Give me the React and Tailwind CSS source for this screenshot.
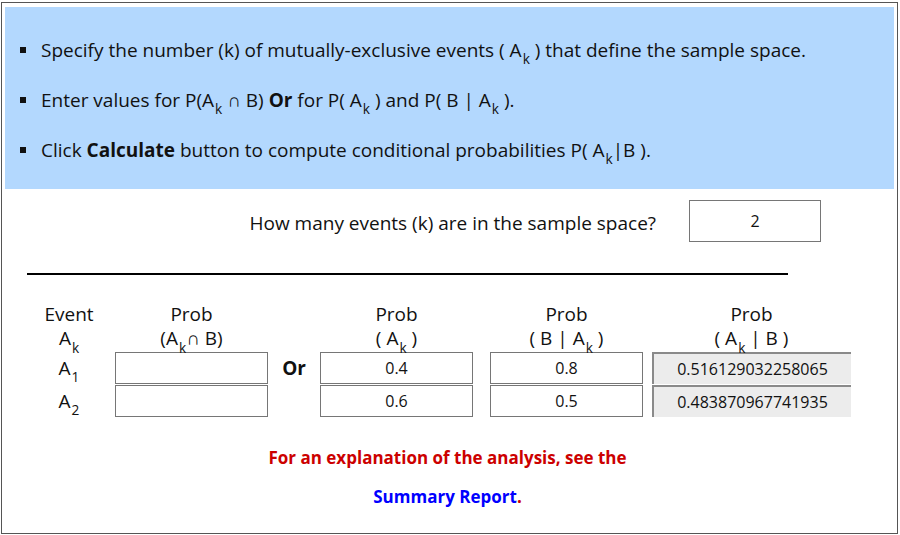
import React from 'react';

const Sub = ({ children }) => (
  <sub className="text-[0.72em] align-[-0.3em] leading-none ml-[1px]">{children}</sub>
);

const Ak = () => (
  <>
    A<Sub>k</Sub>
  </>
);

const Bullet = ({ children }) => (
  <li className="flex items-center h-[50px]">
    <span className="w-[6px] h-[6px] bg-[#111] ml-[15px] mr-[15px] shrink-0" />
    <span>{children}</span>
  </li>
);

const InputBox = ({ value }) => (
  <div className="w-[153px] h-[32px] border border-[#767676] bg-white flex items-center justify-center text-[16px]">
    {value}
  </div>
);

const OutputBox = ({ value }) => (
  <div className="w-[199px] h-[32px] bg-[#ececec] border-t-2 border-l-2 border-t-[#8a8a8a] border-l-[#8a8a8a] flex items-center justify-center text-[16px]">
    {value}
  </div>
);

const App = () => {
  const rows = [
    { label: '1', joint: '', prior: '0.4', like: '0.8', post: '0.516129032258065' },
    { label: '2', joint: '', prior: '0.6', like: '0.5', post: '0.483870967741935' },
  ];

  return (
    <div className="w-[900px] h-[535px] bg-white pt-[2px] pl-[1px]" style={{ fontFamily: '"Open Sans", "Noto Sans", sans-serif' }}>
      <div className="w-[897px] h-[532px] border border-[#555] px-[3px] pt-[4px] text-[#111]">
        <ul className="bg-[#b3d8fe] h-[182px] pt-[18px] text-[19px]">
          <Bullet>Specify the number (k) of mutually-exclusive events ( <Ak /> ) that define the sample space.</Bullet>
          <Bullet>
            Enter values for P(<Ak /> ∩ B) <b>Or</b> for P( <Ak /> ) and P( B | <Ak /> ).
          </Bullet>
          <Bullet>
            Click <b>Calculate</b> button to compute conditional probabilities P( <Ak />|B ).
          </Bullet>
        </ul>

        <div className="flex items-center mt-[11px] h-[42px] pt-[4px]">
          <div className="w-[684px] text-right pr-[33px] text-[19px]">How many events (k) are in the sample space?</div>
          <div className="w-[132px] h-[42px] -mt-[4px] border border-[#767676] flex items-center justify-center text-[16px]">2</div>
        </div>

        <div className="ml-[22px] w-[761px] h-[2px] bg-black mt-[31px]" />

        <div className="ml-[21px] mt-[27px] text-[19px]">
          <div className="flex leading-[25px]">
            <div className="w-[89px] text-center pr-[3px]">Event</div>
            <div className="w-[153px] text-center">Prob</div>
            <div className="w-[52px]" />
            <div className="w-[153px] text-center">Prob</div>
            <div className="w-[17px]" />
            <div className="w-[153px] text-center">Prob</div>
            <div className="w-[9px]" />
            <div className="w-[199px] text-center">Prob</div>
          </div>
          <div className="flex leading-[22px]">
            <div className="w-[89px] text-center pr-[3px]"><Ak /></div>
            <div className="w-[153px] text-center">(<Ak />∩ B)</div>
            <div className="w-[52px]" />
            <div className="w-[153px] text-center">( <Ak /> )</div>
            <div className="w-[17px]" />
            <div className="w-[153px] text-center">( B | <Ak /> )</div>
            <div className="w-[9px]" />
            <div className="w-[199px] text-center">( <Ak /> | B )</div>
          </div>
          <div className="mt-[1px] flex flex-col gap-[1px]">
            {rows.map((r, i) => (
              <div key={r.label} className="flex items-center">
                <div className="w-[89px] text-center pr-[3px]">
                  A<Sub>{r.label}</Sub>
                </div>
                <InputBox value={r.joint} />
                <div className="w-[52px] text-center font-bold">{i === 0 ? 'Or' : ''}</div>
                <InputBox value={r.prior} />
                <div className="w-[17px]" />
                <InputBox value={r.like} />
                <div className="w-[9px]" />
                <OutputBox value={r.post} />
              </div>
            ))}
          </div>
        </div>

        <div className="text-center font-bold text-[17px] mt-[29px] pr-[4px]">
          <p className="text-[#cc0000] leading-[24px]">For an explanation of the analysis, see the</p>
          <p className="leading-[24px] mt-[15px]">
            <span className="text-[#0000ff]">Summary Report</span>
            <span className="text-[#cc0000]">.</span>
          </p>
        </div>
      </div>
    </div>
  );
};

export default App;
